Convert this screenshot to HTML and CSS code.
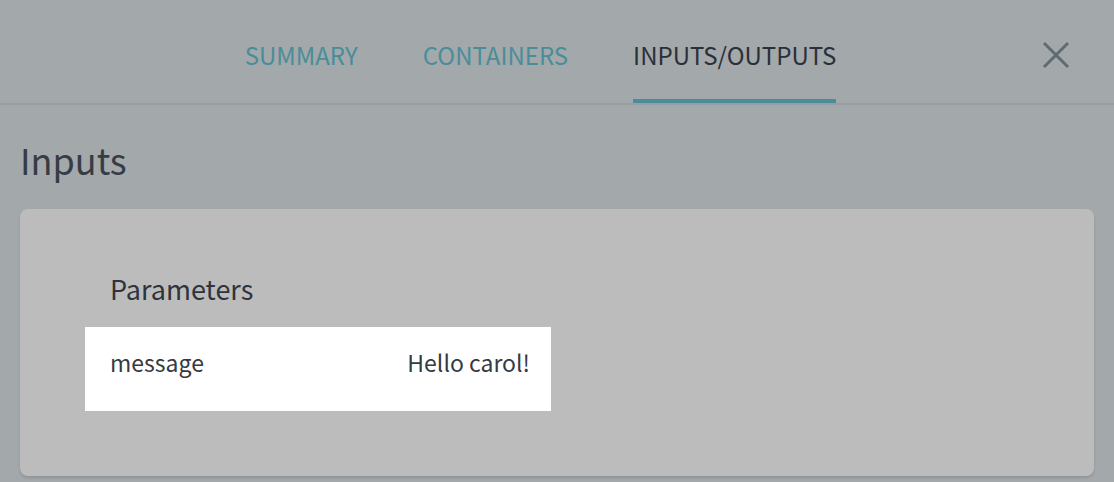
FILE: index.html
```html
<!DOCTYPE html>
<html>
<head>
<meta charset="utf-8">
<link rel="stylesheet" href="styles.css">
</head>
<body>
<div class="panel">
  <header class="header">
    <nav class="tabs">
      <div class="tab">SUMMARY</div>
      <div class="tab">CONTAINERS</div>
      <div class="tab active">INPUTS/OUTPUTS</div>
    </nav>
    <div class="close" aria-label="close">
      <svg width="28" height="28" viewBox="0 0 28 28"><path d="M2 2 L26 26 M26 2 L2 26" stroke="#5f6a73" stroke-width="3" fill="none"/></svg>
    </div>
  </header>
  <main class="content">
    <h1 class="title">Inputs</h1>
    <section class="card">
      <h2 class="subtitle">Parameters</h2>
      <div class="row">
        <span class="key">message</span>
        <span class="value">Hello carol!</span>
      </div>
    </section>
  </main>
</div>
</body>
</html>
```

FILE: styles.css
```css
html, body {
  margin: 0;
  padding: 0;
  height: 100%;
  background: #a3a8ab;
  font-family: "Noto Sans CJK KR", "Noto Sans", sans-serif;
  overflow: hidden;
}
.panel {
  display: flex;
  flex-direction: column;
}
.header {
  height: 103px;
  border-bottom: 2px solid #979da1;
  display: flex;
  justify-content: center;
  position: relative;
}
.tabs {
  display: flex;
  gap: 65px;
  margin-right: 33px;
}
.tab {
  font-size: 24px;
  line-height: 32px;
  color: #4a8d99;
  padding-top: 39px;
  box-sizing: border-box;
  border-bottom: 4px solid transparent;
  height: 103px;
}
.tab.active {
  color: #2b2f37;
  border-bottom-color: #4a8d99;
}
.close {
  position: absolute;
  right: 44px;
  top: 41px;
  width: 28px;
  height: 28px;
}
.content {
  padding: 0 20px;
}
.title {
  margin: 30px 0 0;
  font-weight: 400;
  font-size: 36px;
  line-height: 48px;
  color: #363c45;
}
.card {
  margin-top: 26px;
  background: #bcbcbc;
  border-radius: 8px;
  height: 267px;
  padding: 62px 0 0 65px;
  box-sizing: border-box;
  box-shadow: 0 2px 3px rgba(0,0,0,0.12);
}
.subtitle {
  margin: 0;
  font-weight: 400;
  font-size: 27px;
  line-height: 36px;
  color: #2f333b;
  padding-left: 25px;
}
.row {
  margin-top: 20px;
  width: 466px;
  height: 84px;
  background: #ffffff;
  display: flex;
  justify-content: space-between;
  align-items: baseline;
  padding: 20px 21px 0 25px;
  box-sizing: border-box;
  line-height: 30px;
  font-size: 23px;
  color: #363a42;
}
```
